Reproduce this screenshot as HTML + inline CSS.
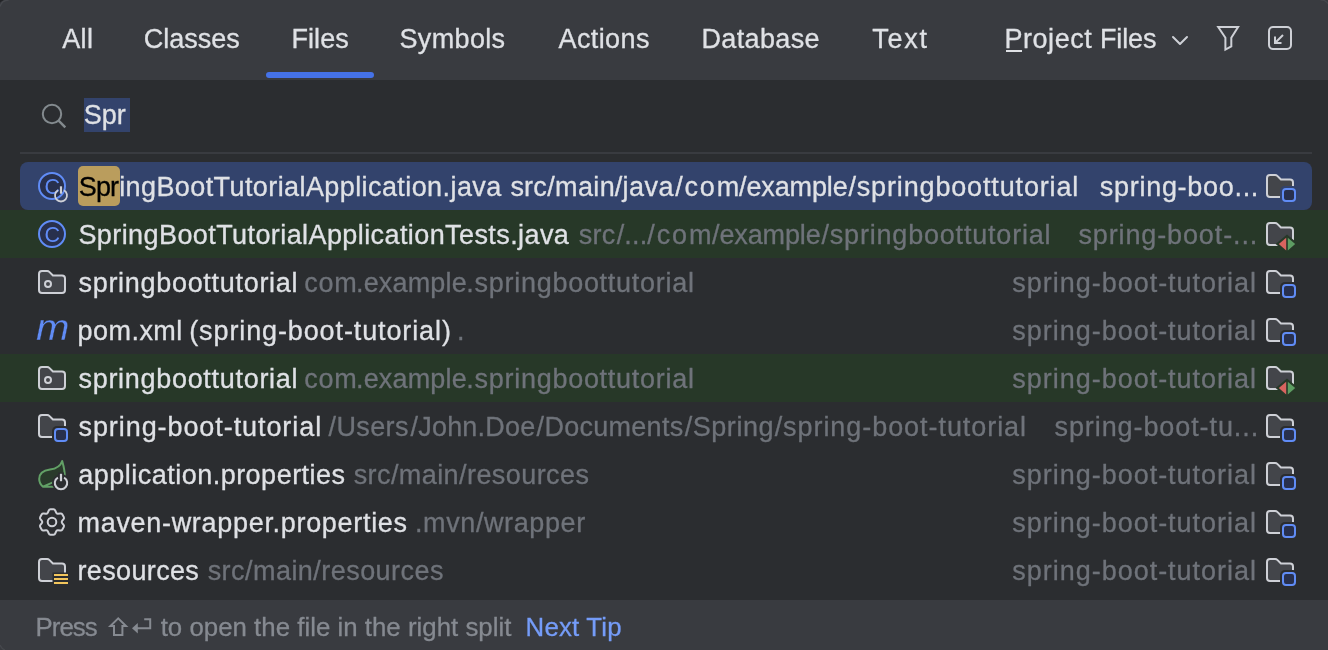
<!DOCTYPE html>
<html><head><meta charset="utf-8"><title>Search Everywhere</title>
<style>
html,body{margin:0;padding:0;}
body{width:1328px;height:650px;background:#2b2d30;position:relative;overflow:hidden;font-family:"Liberation Sans",sans-serif;}
.b{position:absolute;}
.t{position:absolute;white-space:pre;line-height:32px;font-family:"Liberation Sans",sans-serif;-webkit-text-stroke:0.3px currentColor;}
#txt{position:absolute;left:0;top:0;width:1328px;height:650px;will-change:transform;}
svg.ic{position:absolute;left:0;top:0;will-change:transform;}
</style></head><body>
<div class="b" style="left:0;top:0;width:1328px;height:80px;background:#393b40"></div>
<div class="b" style="left:266px;top:72px;width:108px;height:6px;border-radius:3px;background:#4572e8"></div>
<div class="b" style="left:84px;top:98px;width:46px;height:34px;background:#33436c"></div>
<div class="b" style="left:20px;top:152px;width:1292px;height:2px;background:#393b40"></div>
<div class="b" style="left:20px;top:162px;width:1292px;height:48px;border-radius:8px;background:#33436c"></div>
<div class="b" style="left:0;top:210px;width:1328px;height:48px;background:#273828"></div>
<div class="b" style="left:0;top:354px;width:1328px;height:48px;background:#273828"></div>
<div class="b" style="left:78px;top:166px;width:42px;height:40px;border-radius:5px;background:#ba9d5d"></div>
<div class="b" style="left:0;top:600px;width:1328px;height:50px;background:#393b40"></div>
<div id="txt">
<span class="t" id="micon" style="left:36px;top:305px;font-size:37.5px;line-height:44px;font-style:italic;color:#608cf6;-webkit-text-stroke:0.3px #2b2d30;transform:scaleX(1.07);transform-origin:0 0">m</span>
<span class="t" id="tab_all" style="left:62.17px;top:23.04px;font-size:27px;letter-spacing:0.397px;color:#dfe1e5;">All</span>
<span class="t" id="tab_classes" style="left:143.83px;top:23.04px;font-size:27px;letter-spacing:-0.011px;color:#dfe1e5;">Classes</span>
<span class="t" id="tab_files" style="left:291.50px;top:23.04px;font-size:27px;letter-spacing:0.058px;color:#dfe1e5;">Files</span>
<span class="t" id="tab_symbols" style="left:399.50px;top:23.04px;font-size:27px;letter-spacing:0.344px;color:#dfe1e5;">Symbols</span>
<span class="t" id="tab_actions" style="left:558.46px;top:23.04px;font-size:27px;letter-spacing:0.415px;color:#dfe1e5;">Actions</span>
<span class="t" id="tab_database" style="left:701.41px;top:23.04px;font-size:27px;letter-spacing:0.360px;color:#dfe1e5;">Database</span>
<span class="t" id="tab_text" style="left:872.33px;top:23.04px;font-size:27px;letter-spacing:1.711px;color:#dfe1e5;">Text</span>
<span class="t" id="tab_project" style="left:1004.46px;top:23.04px;font-size:27px;letter-spacing:0.541px;color:#dfe1e5;">Project<span id="tab_project2" style="position:relative;left:0.36px;letter-spacing:-0.133px;color:#dfe1e5;"> Files</span></span>
<span class="t" id="search" style="left:83.83px;top:98.84px;font-size:27px;letter-spacing:-0.103px;color:#dfe1e5;">Spr</span>
<span class="t" id="r1a0" style="left:78.73px;top:171.04px;font-size:27px;letter-spacing:-0.851px;color:#000;">Spr<span id="r1a" style="position:relative;left:0.95px;letter-spacing:0.413px;color:#dfe1e5;">ingBootTutorialApplication.java</span></span>
<span class="t" id="r1b" style="left:510.50px;top:171.04px;font-size:27px;letter-spacing:0.100px;color:#dfe1e5;">src<span id="r1b_1" style="position:relative;left:0.42px;letter-spacing:0.382px;color:#dfe1e5;">/main</span><span id="r1b_2" style="position:relative;left:-0.08px;letter-spacing:0.452px;color:#dfe1e5;">/java</span><span id="r1b_3" style="position:relative;left:1.34px;letter-spacing:1.754px;color:#dfe1e5;">/com</span><span id="r1b_4" style="position:relative;left:-0.47px;letter-spacing:-0.142px;color:#dfe1e5;">/example</span><span id="r1b_5" style="position:relative;left:0.41px;letter-spacing:0.850px;color:#dfe1e5;">/springboottutorial</span></span>
<span class="t" id="r1c" style="left:1099.86px;top:171.04px;font-size:27px;letter-spacing:0.702px;color:#dfe1e5;">spring-boo...</span>
<span class="t" id="r2a" style="left:78.46px;top:219.04px;font-size:27px;letter-spacing:0.411px;color:#dfe1e5;">SpringBootTutorialApplicationTests.java</span>
<span class="t" id="r2b" style="left:578.71px;top:219.04px;font-size:27px;letter-spacing:0.232px;color:#6f737a;">src<span id="r2b_1" style="position:relative;left:1.33px;letter-spacing:0.154px;color:#6f737a;">/...</span><span id="r2b_2" style="position:relative;left:1.33px;letter-spacing:1.865px;color:#6f737a;">/com</span><span id="r2b_3" style="position:relative;left:0.08px;letter-spacing:-0.138px;color:#6f737a;">/example</span><span id="r2b_4" style="position:relative;left:1.00px;letter-spacing:0.808px;color:#6f737a;">/springboottutorial</span></span>
<span class="t" id="r2c" style="left:1078.41px;top:219.04px;font-size:27px;letter-spacing:0.878px;color:#6f737a;">spring-boot-...</span>
<span class="t" id="r3a" style="left:78.50px;top:267.04px;font-size:27px;letter-spacing:0.698px;color:#dfe1e5;">springboottutorial</span>
<span class="t" id="r3b" style="left:304.17px;top:267.04px;font-size:27px;letter-spacing:0.798px;color:#6f737a;">com<span id="r3b_1" style="position:relative;left:-1.53px;letter-spacing:0.149px;color:#6f737a;">.example</span><span id="r3b_2" style="position:relative;left:-2.00px;letter-spacing:0.722px;color:#6f737a;">.springboottutorial</span></span>
<span class="t" id="r3c" style="left:1012.33px;top:267.04px;font-size:27px;letter-spacing:0.976px;color:#6f737a;">spring-boot-tutorial</span>
<span class="t" id="r4a0" style="left:77.50px;top:315.04px;font-size:27px;letter-spacing:0.464px;color:#dfe1e5;">pom.xml<span id="r4a" style="position:relative;left:-1.95px;letter-spacing:0.885px;color:#dfe1e5;"> (spring-boot-tutorial)</span></span>
<span class="t" id="r4b" style="left:457.12px;top:315.04px;font-size:27px;letter-spacing:0.600px;color:#6f737a;">.</span>
<span class="t" id="r4c" style="left:1012.33px;top:315.04px;font-size:27px;letter-spacing:0.976px;color:#6f737a;">spring-boot-tutorial</span>
<span class="t" id="r5a" style="left:78.50px;top:363.04px;font-size:27px;letter-spacing:0.698px;color:#dfe1e5;">springboottutorial</span>
<span class="t" id="r5b" style="left:304.17px;top:363.04px;font-size:27px;letter-spacing:0.798px;color:#6f737a;">com<span id="r5b_1" style="position:relative;left:-1.53px;letter-spacing:0.149px;color:#6f737a;">.example</span><span id="r5b_2" style="position:relative;left:-2.00px;letter-spacing:0.722px;color:#6f737a;">.springboottutorial</span></span>
<span class="t" id="r5c" style="left:1012.33px;top:363.04px;font-size:27px;letter-spacing:0.976px;color:#6f737a;">spring-boot-tutorial</span>
<span class="t" id="r6a" style="left:78.50px;top:411.04px;font-size:27px;letter-spacing:0.922px;color:#dfe1e5;">spring-boot-tutorial</span>
<span class="t" id="r6b" style="left:328.60px;top:411.04px;font-size:27px;letter-spacing:0.362px;color:#6f737a;">/Users<span id="r6b_1" style="position:relative;left:1.66px;letter-spacing:0.225px;color:#6f737a;">/John.Doe</span><span id="r6b_2" style="position:relative;left:2.73px;letter-spacing:0.282px;color:#6f737a;">/Documents</span><span id="r6b_3" style="position:relative;left:3.86px;letter-spacing:0.568px;color:#6f737a;">/Spring</span><span id="r6b_4" style="position:relative;left:4.34px;letter-spacing:0.941px;color:#6f737a;">/spring-boot-tutorial</span></span>
<span class="t" id="r6c" style="left:1054.50px;top:411.04px;font-size:27px;letter-spacing:0.913px;color:#6f737a;">spring-boot-tu...</span>
<span class="t" id="r7a" style="left:78.17px;top:459.04px;font-size:27px;letter-spacing:0.490px;color:#dfe1e5;">application.properties</span>
<span class="t" id="r7b" style="left:353.65px;top:459.04px;font-size:27px;letter-spacing:0.424px;color:#6f737a;">src/main/resources</span>
<span class="t" id="r7c" style="left:1012.33px;top:459.04px;font-size:27px;letter-spacing:0.976px;color:#6f737a;">spring-boot-tutorial</span>
<span class="t" id="r8a" style="left:77.50px;top:507.04px;font-size:27px;letter-spacing:0.691px;color:#dfe1e5;">maven-wrapper.properties</span>
<span class="t" id="r8b" style="left:414.91px;top:507.04px;font-size:27px;letter-spacing:0.616px;color:#6f737a;">.mvn/wrapper</span>
<span class="t" id="r8c" style="left:1012.33px;top:507.04px;font-size:27px;letter-spacing:0.976px;color:#6f737a;">spring-boot-tutorial</span>
<span class="t" id="r9a" style="left:77.50px;top:555.04px;font-size:27px;letter-spacing:0.350px;color:#dfe1e5;">resources</span>
<span class="t" id="r9b" style="left:207.65px;top:555.04px;font-size:27px;letter-spacing:0.457px;color:#6f737a;">src/main/resources</span>
<span class="t" id="r9c" style="left:1012.33px;top:555.04px;font-size:27px;letter-spacing:0.976px;color:#6f737a;">spring-boot-tutorial</span>
<span class="t" id="f1" style="left:35.46px;top:611.16px;font-size:25.8px;letter-spacing:-0.933px;color:#868a91;">Press</span>
<span class="t" id="f2" style="left:160.67px;top:611.16px;font-size:25.8px;letter-spacing:0.024px;color:#868a91;">to open the file in the right split</span>
<span class="t" id="f3" style="left:525.58px;top:611.16px;font-size:25.8px;letter-spacing:0.186px;color:#759cf8;">Next Tip</span>
</div>
<svg class="ic" width="1328" height="650" viewBox="0 0 1328 650">
<path d="M1173 37L1180 44L1187 37" fill="none" stroke="#ced0d6" stroke-width="2" stroke-linecap="round" stroke-linejoin="round"/>
<path d="M1218.2 27H1238.1L1231.3 37.8V46.3L1225.4 49.6V37.8Z" fill="none" stroke="#ced0d6" stroke-width="2" stroke-linejoin="miter"/>
<rect x="1269" y="27" width="22" height="22" rx="4" fill="none" stroke="#ced0d6" stroke-width="2"/>
<path d="M1283 35L1275 43M1275 36.5V43H1281.5" fill="none" stroke="#ced0d6" stroke-width="2" stroke-linecap="butt"/>
<rect x="1006" y="50" width="16" height="2" fill="#dfe1e5"/>
<circle cx="52" cy="114" r="9.2" fill="none" stroke="#838a8e" stroke-width="2"/><path d="M58.6 120.6L65.3 127.3" stroke="#838a8e" stroke-width="2.4" stroke-linecap="butt"/>
<circle cx="52" cy="186" r="13" fill="#28304d" stroke="#608cf6" stroke-width="2"/><text x="52.3" y="193.6" text-anchor="middle" font-family="Liberation Sans, sans-serif" font-size="21.5" fill="#608cf6">C</text>
<path d="M64.00 190.30A6.0 6.0 0 1 1 58.00 190.30" fill="none" stroke="#ced0d6" stroke-width="1.8" stroke-linecap="butt"/><path d="M61 186.3V193.7" stroke="#ced0d6" stroke-width="2.2" stroke-linecap="butt"/>
<circle cx="52" cy="234" r="13" fill="#28304d" stroke="#608cf6" stroke-width="2"/><text x="52.3" y="241.6" text-anchor="middle" font-family="Liberation Sans, sans-serif" font-size="21.5" fill="#608cf6">C</text>
<path transform="translate(36,266)" d="M3 8C3 6.34 4.34 5 6 5H11.17C11.97 5 12.73 5.32 13.29 5.88L16.71 9.29C16.89 9.48 17.15 9.59 17.41 9.59H26C27.66 9.59 29 10.93 29 12.59V24C29 25.66 27.66 27 26 27H6C4.34 27 3 25.66 3 24Z" fill="#43454a" stroke="#ced0d6" stroke-width="2" stroke-linejoin="round"/>
<circle cx="48" cy="284" r="3" fill="none" stroke="#ced0d6" stroke-width="2"/>
<path transform="translate(36,362)" d="M3 8C3 6.34 4.34 5 6 5H11.17C11.97 5 12.73 5.32 13.29 5.88L16.71 9.29C16.89 9.48 17.15 9.59 17.41 9.59H26C27.66 9.59 29 10.93 29 12.59V24C29 25.66 27.66 27 26 27H6C4.34 27 3 25.66 3 24Z" fill="#43454a" stroke="#ced0d6" stroke-width="2" stroke-linejoin="round"/>
<circle cx="48" cy="380" r="3" fill="none" stroke="#ced0d6" stroke-width="2"/>
<path transform="translate(36,410)" d="M3 8C3 6.34 4.34 5 6 5H11.17C11.97 5 12.73 5.32 13.29 5.88L16.71 9.29C16.89 9.48 17.15 9.59 17.41 9.59H26C27.66 9.59 29 10.93 29 12.59V24C29 25.66 27.66 27 26 27H6C4.34 27 3 25.66 3 24Z" fill="#43454a" stroke="#ced0d6" stroke-width="2" stroke-linejoin="round"/>
<rect x="52" y="426" width="18" height="18" rx="5" fill="#2b2d30"/><rect x="55" y="429" width="12" height="12" rx="3" fill="#28304d" stroke="#608cf6" stroke-width="2"/>
<g transform="translate(36,458)"><path d="M26.2 3C24.6 8 21 10.6 14 11.6C7 12.6 3.2 16 3.2 21C3.2 24.4 5 27 7 28.7L17 24.4L28.7 17.5C28.8 12 27.6 8 26.2 3Z" fill="#293a2b" stroke="none"/><path d="M28.7 17.5C28.8 12 27.6 8 26.2 3C24.6 8 21 10.6 14 11.6C7 12.6 3.2 16 3.2 21C3.2 24.4 5 27 7 28.7L17.5 24.2M7 28.7H18" fill="none" stroke="#62a066" stroke-width="2" stroke-linejoin="round" stroke-linecap="round"/></g>
<circle cx="61" cy="483" r="9" fill="#2b2d30"/><rect x="58" y="472.5" width="6" height="10" fill="#2b2d30"/><path d="M64.10 477.63A6.2 6.2 0 1 1 57.90 477.63" fill="none" stroke="#ced0d6" stroke-width="2.0" stroke-linecap="butt"/><path d="M61 473.8V481.2" stroke="#ced0d6" stroke-width="2.2" stroke-linecap="butt"/>
<path d="M55.29 510.52Q54.81 509.31 53.51 509.31L50.49 509.31Q49.19 509.31 48.71 510.52L47.83 512.74Q47.35 513.95 46.06 513.76L43.70 513.41Q42.42 513.22 41.77 514.34L40.25 516.96Q39.60 518.09 40.41 519.11L41.89 520.98Q42.70 522.00 41.89 523.02L40.41 524.89Q39.60 525.91 40.25 527.04L41.77 529.66Q42.42 530.78 43.70 530.59L46.06 530.24Q47.35 530.05 47.83 531.26L48.71 533.48Q49.19 534.69 50.49 534.69L53.51 534.69Q54.81 534.69 55.29 533.48L56.17 531.26Q56.65 530.05 57.94 530.24L60.30 530.59Q61.58 530.78 62.23 529.66L63.75 527.04Q64.40 525.91 63.59 524.89L62.11 523.02Q61.30 522.00 62.11 520.98L63.59 519.11Q64.40 518.09 63.75 516.96L62.23 514.34Q61.58 513.22 60.30 513.41L57.94 513.76Q56.65 513.95 56.17 512.74Z" fill="none" stroke="#ced0d6" stroke-width="2" stroke-linejoin="round"/><circle cx="52" cy="522" r="4.3" fill="none" stroke="#ced0d6" stroke-width="2"/>
<path transform="translate(36,554)" d="M3 8C3 6.34 4.34 5 6 5H11.17C11.97 5 12.73 5.32 13.29 5.88L16.71 9.29C16.89 9.48 17.15 9.59 17.41 9.59H26C27.66 9.59 29 10.93 29 12.59V24C29 25.66 27.66 27 26 27H6C4.34 27 3 25.66 3 24Z" fill="#43454a" stroke="#ced0d6" stroke-width="2" stroke-linejoin="round"/>
<rect x="52.5" y="572.5" width="16" height="14" fill="#2b2d30"/>
<rect x="54" y="574" width="14" height="2" fill="#f2c55c"/>
<rect x="54" y="578" width="14" height="2" fill="#f2c55c"/>
<rect x="54" y="582" width="14" height="2" fill="#f2c55c"/>
<path transform="translate(1264,170)" d="M3 8C3 6.34 4.34 5 6 5H11.17C11.97 5 12.73 5.32 13.29 5.88L16.71 9.29C16.89 9.48 17.15 9.59 17.41 9.59H26C27.66 9.59 29 10.93 29 12.59V24C29 25.66 27.66 27 26 27H6C4.34 27 3 25.66 3 24Z" fill="#43454a" stroke="#ced0d6" stroke-width="2" stroke-linejoin="round"/>
<rect x="1280" y="186" width="18" height="18" rx="5" fill="#33436c"/><rect x="1283" y="189" width="12" height="12" rx="3" fill="#28304d" stroke="#608cf6" stroke-width="2"/>
<path transform="translate(1264,218)" d="M3 8C3 6.34 4.34 5 6 5H11.17C11.97 5 12.73 5.32 13.29 5.88L16.71 9.29C16.89 9.48 17.15 9.59 17.41 9.59H26C27.66 9.59 29 10.93 29 12.59V24C29 25.66 27.66 27 26 27H6C4.34 27 3 25.66 3 24Z" fill="#43454a" stroke="#ced0d6" stroke-width="2" stroke-linejoin="round"/>
<path transform="translate(1264,218)" d="M23 16.6L11.6 26.1L23 35.6L34.4 26.1Z" fill="#273828"/><path transform="translate(1264,218)" d="M14.8 26.1L22.2 19.7V32.5Z" fill="#d8645f"/><path transform="translate(1264,218)" d="M31.2 26.1L23.8 19.7V32.5Z" fill="#5d9d62"/>
<path transform="translate(1264,266)" d="M3 8C3 6.34 4.34 5 6 5H11.17C11.97 5 12.73 5.32 13.29 5.88L16.71 9.29C16.89 9.48 17.15 9.59 17.41 9.59H26C27.66 9.59 29 10.93 29 12.59V24C29 25.66 27.66 27 26 27H6C4.34 27 3 25.66 3 24Z" fill="#43454a" stroke="#ced0d6" stroke-width="2" stroke-linejoin="round"/>
<rect x="1280" y="282" width="18" height="18" rx="5" fill="#2b2d30"/><rect x="1283" y="285" width="12" height="12" rx="3" fill="#28304d" stroke="#608cf6" stroke-width="2"/>
<path transform="translate(1264,314)" d="M3 8C3 6.34 4.34 5 6 5H11.17C11.97 5 12.73 5.32 13.29 5.88L16.71 9.29C16.89 9.48 17.15 9.59 17.41 9.59H26C27.66 9.59 29 10.93 29 12.59V24C29 25.66 27.66 27 26 27H6C4.34 27 3 25.66 3 24Z" fill="#43454a" stroke="#ced0d6" stroke-width="2" stroke-linejoin="round"/>
<rect x="1280" y="330" width="18" height="18" rx="5" fill="#2b2d30"/><rect x="1283" y="333" width="12" height="12" rx="3" fill="#28304d" stroke="#608cf6" stroke-width="2"/>
<path transform="translate(1264,362)" d="M3 8C3 6.34 4.34 5 6 5H11.17C11.97 5 12.73 5.32 13.29 5.88L16.71 9.29C16.89 9.48 17.15 9.59 17.41 9.59H26C27.66 9.59 29 10.93 29 12.59V24C29 25.66 27.66 27 26 27H6C4.34 27 3 25.66 3 24Z" fill="#43454a" stroke="#ced0d6" stroke-width="2" stroke-linejoin="round"/>
<path transform="translate(1264,362)" d="M23 16.6L11.6 26.1L23 35.6L34.4 26.1Z" fill="#273828"/><path transform="translate(1264,362)" d="M14.8 26.1L22.2 19.7V32.5Z" fill="#d8645f"/><path transform="translate(1264,362)" d="M31.2 26.1L23.8 19.7V32.5Z" fill="#5d9d62"/>
<path transform="translate(1264,410)" d="M3 8C3 6.34 4.34 5 6 5H11.17C11.97 5 12.73 5.32 13.29 5.88L16.71 9.29C16.89 9.48 17.15 9.59 17.41 9.59H26C27.66 9.59 29 10.93 29 12.59V24C29 25.66 27.66 27 26 27H6C4.34 27 3 25.66 3 24Z" fill="#43454a" stroke="#ced0d6" stroke-width="2" stroke-linejoin="round"/>
<rect x="1280" y="426" width="18" height="18" rx="5" fill="#2b2d30"/><rect x="1283" y="429" width="12" height="12" rx="3" fill="#28304d" stroke="#608cf6" stroke-width="2"/>
<path transform="translate(1264,458)" d="M3 8C3 6.34 4.34 5 6 5H11.17C11.97 5 12.73 5.32 13.29 5.88L16.71 9.29C16.89 9.48 17.15 9.59 17.41 9.59H26C27.66 9.59 29 10.93 29 12.59V24C29 25.66 27.66 27 26 27H6C4.34 27 3 25.66 3 24Z" fill="#43454a" stroke="#ced0d6" stroke-width="2" stroke-linejoin="round"/>
<rect x="1280" y="474" width="18" height="18" rx="5" fill="#2b2d30"/><rect x="1283" y="477" width="12" height="12" rx="3" fill="#28304d" stroke="#608cf6" stroke-width="2"/>
<path transform="translate(1264,506)" d="M3 8C3 6.34 4.34 5 6 5H11.17C11.97 5 12.73 5.32 13.29 5.88L16.71 9.29C16.89 9.48 17.15 9.59 17.41 9.59H26C27.66 9.59 29 10.93 29 12.59V24C29 25.66 27.66 27 26 27H6C4.34 27 3 25.66 3 24Z" fill="#43454a" stroke="#ced0d6" stroke-width="2" stroke-linejoin="round"/>
<rect x="1280" y="522" width="18" height="18" rx="5" fill="#2b2d30"/><rect x="1283" y="525" width="12" height="12" rx="3" fill="#28304d" stroke="#608cf6" stroke-width="2"/>
<path transform="translate(1264,554)" d="M3 8C3 6.34 4.34 5 6 5H11.17C11.97 5 12.73 5.32 13.29 5.88L16.71 9.29C16.89 9.48 17.15 9.59 17.41 9.59H26C27.66 9.59 29 10.93 29 12.59V24C29 25.66 27.66 27 26 27H6C4.34 27 3 25.66 3 24Z" fill="#43454a" stroke="#ced0d6" stroke-width="2" stroke-linejoin="round"/>
<rect x="1280" y="570" width="18" height="18" rx="5" fill="#2b2d30"/><rect x="1283" y="573" width="12" height="12" rx="3" fill="#28304d" stroke="#608cf6" stroke-width="2"/>
<path d="M0 0H3.8A10 10 0 0 0 0 2.8Z" fill="#232427"/><path d="M0 6.6A9 9 0 0 1 8.6 0" fill="none" stroke="#46484d" stroke-width="1.3"/>
<path d="M1320.5 0A9 9 0 0 1 1328 3.6" fill="none" stroke="#46484d" stroke-width="1.2"/>
<path d="M0 645A9 9 0 0 0 5 650" fill="none" stroke="#46484d" stroke-width="1.2"/>
<path d="M118.2 618.4L110.4 626H114V635H122.4V626H126L118.2 618.4Z" fill="none" stroke="#868a91" stroke-width="2" stroke-linejoin="miter"/>
<path d="M132 628.3L137.8 623V633.6Z" fill="#868a91"/><path d="M137 628.3H150.2V619.3H144.2" fill="none" stroke="#868a91" stroke-width="2"/>
</svg>
</body></html>
